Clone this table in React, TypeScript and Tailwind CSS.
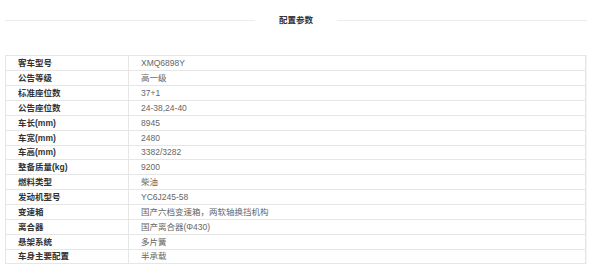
import React from "react";

const rows: [string, string, number][] = [
  ["客车型号", "XMQ6898Y", 15],
  ["公告等级", "高一级", 15],
  ["标准座位数", "37+1", 15],
  ["公告座位数", "24-38,24-40", 15],
  ["车长(mm)", "8945", 15],
  ["车宽(mm)", "2480", 15],
  ["车高(mm)", "3382/3282", 14],
  ["整备质量(kg)", "9200", 15],
  ["燃料类型", "柴油", 15],
  ["发动机型号", "YC6J245-58", 15],
  ["变速箱", "国产六档变速箱，两软轴换挡机构", 15],
  ["离合器", "国产离合器(Φ430)", 15],
  ["悬架系统", "多片簧", 15],
  ["车身主要配置", "半承载", 14],
];

export default function App() {
  return (
    <div
      className="w-[600px] h-[276px] bg-white overflow-hidden"
      style={{ fontFamily: '"Liberation Sans", "Noto Sans CJK SC", sans-serif' }}
    >
      <div className="flex items-center h-[12px] mt-[14px] pl-[5px] pr-[13px]">
        <div className="flex-1 h-px bg-[#ececec]" />
        <div className="mx-[24px] text-[8.5px] leading-[12px] font-bold text-[#333]">配置参数</div>
        <div className="flex-1 h-px bg-[#ececec]" />
      </div>
      <div className="ml-[5px] mt-[29px] w-[581px] border-t border-l border-r border-[#e6e6e6] shadow-[1px_0_0_#f4f4f4]">
        {rows.map(([k, v, h], i) => (
          <div
            key={i}
            className="flex border-b border-[#e6e6e6]"
            style={{ height: h }}
          >
            <div className="w-[123px] shrink-0 border-r border-[#e6e6e6] pl-[12px] flex items-center text-[8.5px] font-semibold text-[#333] whitespace-nowrap">
              {k}
            </div>
            <div className="flex-1 pl-[12px] flex items-center text-[8.5px] text-[#666] whitespace-nowrap">
              {v}
            </div>
          </div>
        ))}
      </div>
    </div>
  );
}
